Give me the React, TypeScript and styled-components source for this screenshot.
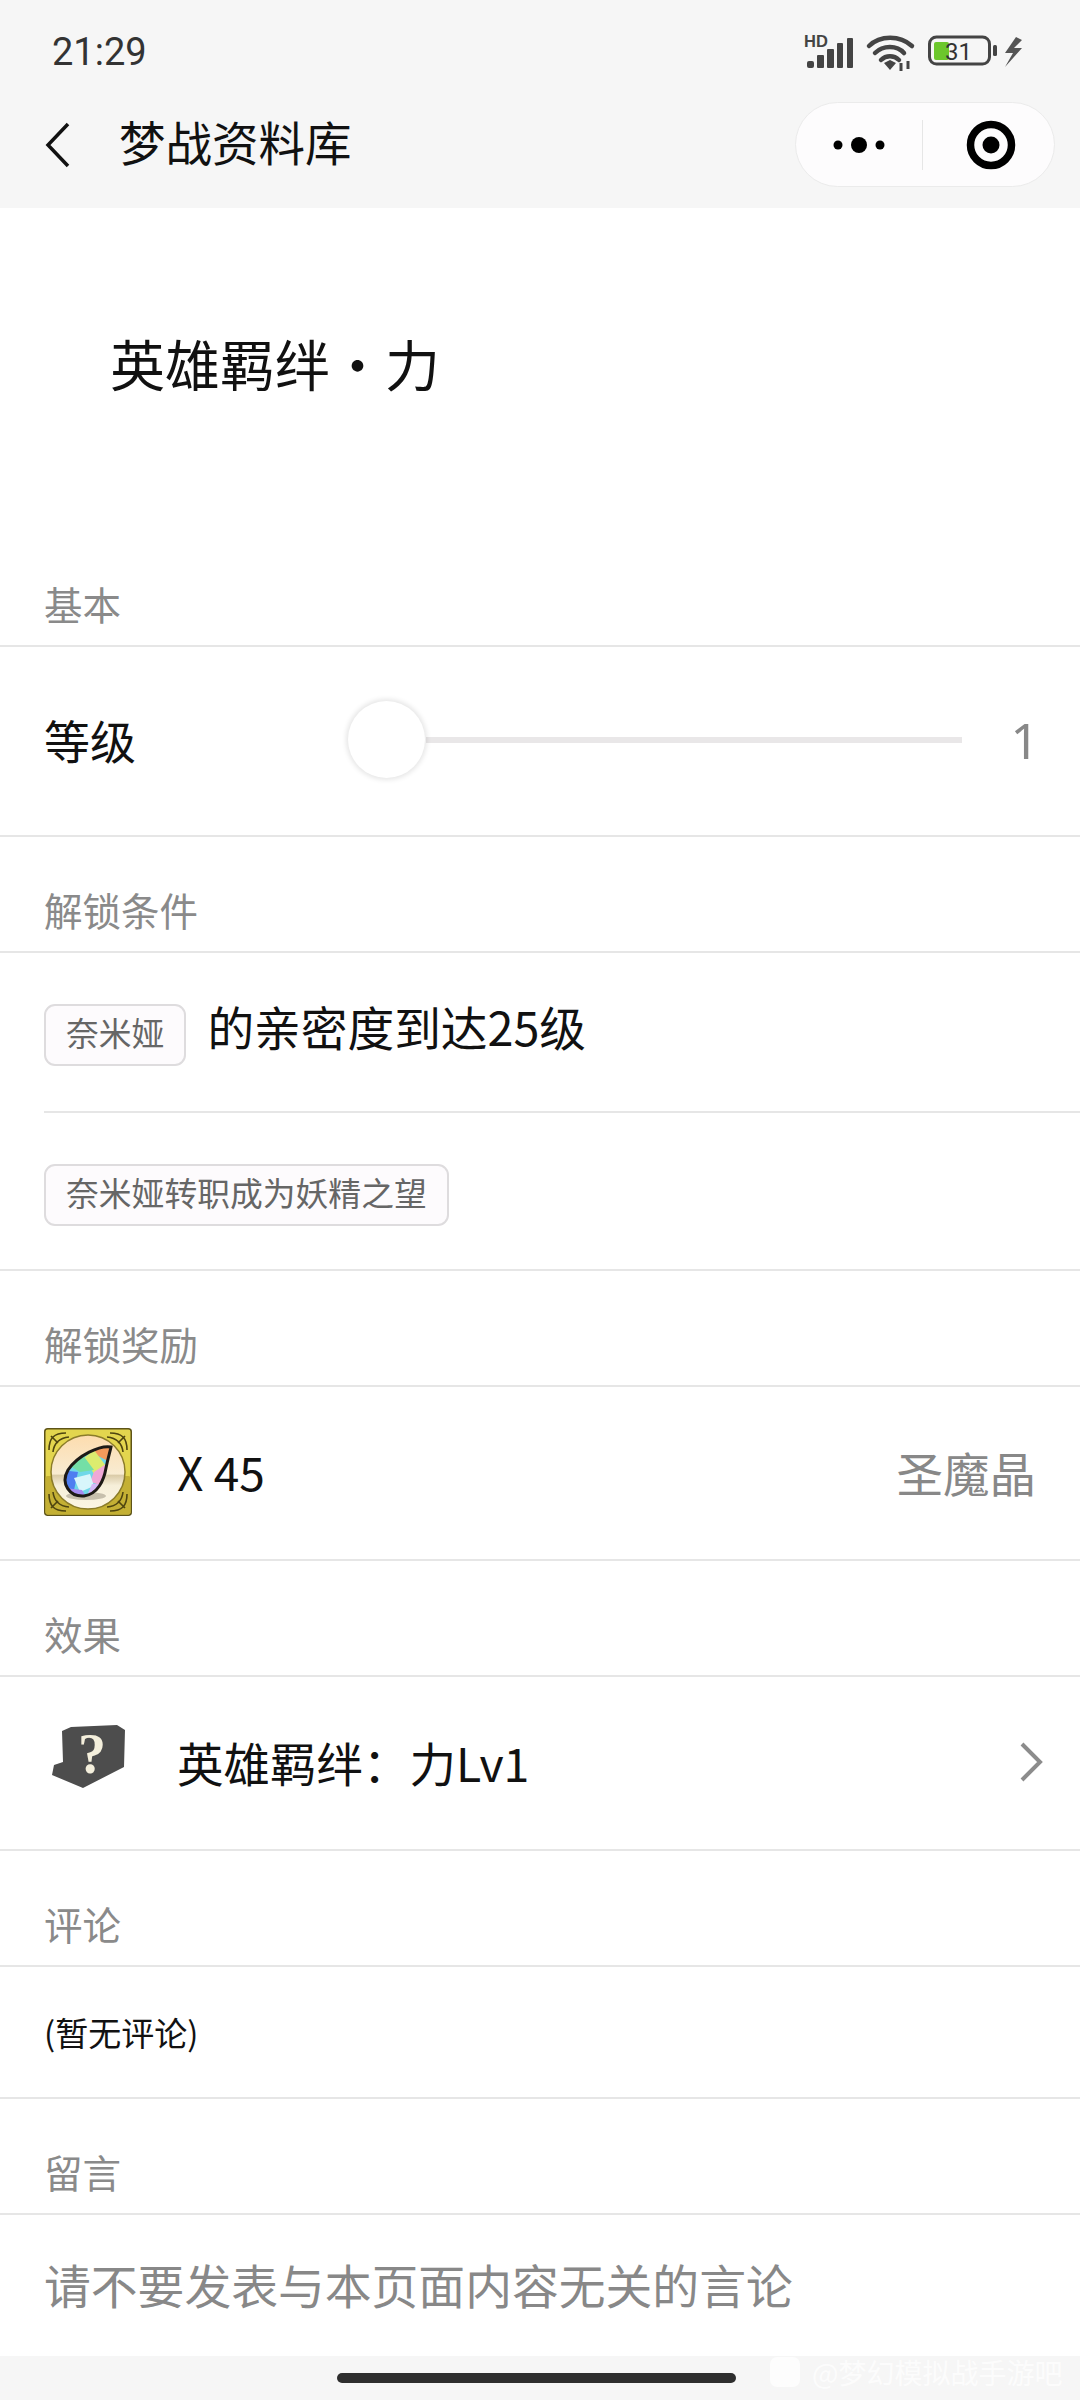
import React from "react";
import styled, { createGlobalStyle } from "styled-components";

const Global = createGlobalStyle`
  html, body { margin: 0; padding: 0; background: #fff; }
  body { font-family: "Noto Sans CJK SC", "Noto Sans", sans-serif; }
  * { box-sizing: border-box; }
`;

const Page = styled.div`
  position: relative;
  width: 1080px;
  height: 2400px;
  display: flex;
  flex-direction: column;
  background: #fff;
  overflow: hidden;
`;

const Top = styled.header`
  height: 208px;
  background: #f6f6f6;
  display: flex;
  flex-direction: column;
`;

const StatusBar = styled.div`
  height: 102px;
  padding: 30px 58px 0 52px;
  display: flex;
  justify-content: space-between;
  align-items: flex-start;
`;

const Time = styled.span`
  font-family: Roboto, sans-serif;
  font-size: 38px;
  line-height: 44px;
  color: #333;
`;

const StatusIcons = styled.svg`
  display: block;
  margin-top: -4px;
`;

const NavBar = styled.div`
  flex: 1;
  display: flex;
  align-items: flex-start;
  padding: 0 25px 0 45px;
`;

const BackIcon = styled.svg`
  display: block;
  margin-top: 20px;
`;

const NavTitle = styled.div`
  margin-left: 48px;
  margin-top: -3px;
  font-size: 46.500px;
  line-height: 84px;
  color: #111;
`;

const Capsule = styled.div`
  margin-left: auto;
  width: 260px;
  height: 85px;
  border-radius: 43px;
  background: #fdfcfd;
  border: 1.500px solid #ebebeb;
  display: flex;
  align-items: center;
`;

const CapsuleSide = styled.div`
  flex: 1;
  height: 50px;
  display: flex;
  align-items: center;
  justify-content: center;
  & + & { border-left: 1.500px solid #e6e6e6; padding-left: 6px; }
`;

const TitleBlock = styled.div`
  height: 323px;
  padding: 126px 0 0 110px;
  font-size: 55px;
  line-height: 56px;
  color: #111;
`;

const SectionLabel = styled.div`
  height: 116px;
  padding: 0 0 20px 44px;
  display: flex;
  align-items: flex-end;
  border-bottom: 2px solid #e6e6e6;
  font-size: 38.500px;
  line-height: 44px;
  color: #8a8a8a;
`;

const Row = styled.div<{ $h: number; $inset?: boolean; $plain?: boolean }>`
  position: relative;
  height: ${(p) => p.$h}px;
  display: flex;
  align-items: center;
  padding: 0 44px 3px;
  border-bottom: ${(p) => (p.$plain ? "none" : "2px solid #e6e6e6")};
  margin-left: ${(p) => (p.$inset ? 44 : 0)}px;
  padding-left: ${(p) => (p.$inset ? 0 : 44)}px;
`;

const Text = styled.span<{ $size?: number }>`
  font-size: ${(p) => p.$size ?? 46}px;
  line-height: 1.2;
  color: #111;
`;

const SideText = styled.span`
  margin-left: auto;
  font-size: 46.500px;
  line-height: 1.2;
  color: #888;
`;

const LevelLabel = styled(Text)`
  width: 302px;
`;

const Slider = styled.div`
  position: relative;
  width: 616px;
  height: 6px;
  background: linear-gradient(to right, transparent 80px, #e9e7e8 80px);
`;

const Thumb = styled.div`
  position: absolute;
  left: 2px;
  top: -36px;
  width: 77px;
  height: 77px;
  border-radius: 50%;
  background: #fff;
  box-shadow: 0 0 5px 2px rgba(0, 0, 0, 0.1);
`;

const LevelValue = styled(SideText)`
  font-family: "Noto Sans", sans-serif;
  font-size: 50px;
  margin-right: -3px;
`;

const Tag = styled.span`
  height: 62px;
  display: inline-flex;
  align-items: center;
  padding: 0 20px 7px;
  border: 2px solid #dedcde;
  border-radius: 11px;
  background: #fdfbfd;
  font-size: 32.800px;
  color: #666;
  white-space: nowrap;
`;

const ConditionOne = styled.div`
  display: flex;
  align-items: flex-start;
  gap: 21px;
  margin-top: 9px;
`;

const ConditionText = styled(Text)`
  margin-top: -6px;
  font-size: 46.700px;
`;

const ConditionTwo = styled.div`
  display: flex;
  margin-top: 10px;
`;

const IconBox = styled.div`
  width: 88px;
  height: 88px;
  margin-right: 45px;
  flex: none;
`;

const Drawing = styled.svg`
  display: block;
`;

const RightChevron = styled.svg`
  display: block;
  position: absolute;
  right: 36px;
  top: 65px;
`;

const CommentText = styled(Text)`
  margin-top: 4px;
`;

const Placeholder = styled.span`
  font-size: 46.800px;
  line-height: 1.2;
  color: #888;
`;

const BottomBar = styled.footer`
  position: relative;
  flex: 1;
  background: #f6f6f6;
  display: flex;
  justify-content: flex-start;
  padding: 17px 0 0 337px;
`;

const HomePill = styled.div`
  width: 399px;
  height: 10px;
  border-radius: 5px;
  background: #2e2e2e;
`;

const Watermark = styled.div`
  position: absolute;
  left: 770px;
  top: 1px;
  display: flex;
  align-items: center;
  gap: 12px;
  color: rgba(255, 255, 255, 0.72);
  font-size: 28px;
  line-height: 30px;
  white-space: nowrap;
`;

const WatermarkBadge = styled.div`
  width: 30px;
  height: 30px;
  border-radius: 7px;
  background: rgba(255, 255, 255, 0.72);
`;

const Status = () => (
  <StatusIcons width="218" height="48" viewBox="0 -8 218 48">
    <text x="0" y="13" fontFamily="Liberation Sans, sans-serif" fontWeight="700" fontSize="16.500" fill="#444">HD</text>
    <g fill="#444">
      <rect x="3" y="27" width="7" height="7" rx="2" />
      <rect x="13" y="21" width="7" height="13" rx="1" />
      <rect x="23" y="15" width="7" height="19" rx="1" />
      <rect x="33" y="9" width="6" height="25" rx="1" />
      <rect x="43" y="4" width="6" height="30" rx="1" />
    </g>
    <g fill="none" stroke="#444" strokeWidth="4.500" strokeLinecap="round">
      <path d="M65 12 C76 1 96 1 108 12" />
      <path d="M71 19 C79 11 93 11 100 19" />
      <path d="M77 26 C82 21 90 21 95 26" />
    </g>
    <path d="M80 29 L86 26 L92 29 L86 36 Z" fill="#444" />
    <path d="M97 29v8M104 27v8" stroke="#444" strokeWidth="3" />
    <rect x="125.500" y="3" width="60" height="27" rx="7" fill="none" stroke="#444" strokeWidth="3" />
    <rect x="130" y="8" width="15" height="18" rx="2" fill="#6cc72c" />
    <text x="141" y="26" fontFamily="Roboto, sans-serif" fontSize="24" fill="#333">31</text>
    <rect x="189" y="11" width="4" height="11" rx="1.500" fill="#444" />
    <path d="M212 3 L201 19 L209 19 L201 33 L218 14 L210 14 L218 6 Z" fill="#555" />
  </StatusIcons>
);

const GEM_SHAPE = "M67 19 C56 17 34 27 24 42 C16 56 26 69 40 68 C54 66 60 52 62 40 C64 30 66 24 67 19 Z";

const Gem = () => (
  <Drawing width="88" height="88" viewBox="0 0 88 88">
    <defs>
      <linearGradient id="disc" x1="0" y1="0" x2="0" y2="1">
        <stop offset="0" stopColor="#fddcae" />
        <stop offset="0.53" stopColor="#f8ecd2" />
        <stop offset="0.54" stopColor="#d9caa6" />
        <stop offset="0.68" stopColor="#f6efd9" />
        <stop offset="1" stopColor="#fcf6e4" />
      </linearGradient>
      <clipPath id="gemClip">
        <path d={GEM_SHAPE} />
      </clipPath>
    </defs>
    <rect x="0.750" y="0.750" width="86.500" height="86.500" rx="3" fill="#e3d54e" stroke="#5d5318" strokeWidth="1.500" />
    <rect x="1.500" y="48" width="85" height="38.500" rx="2" fill="#c4b034" />
    <g fill="none" stroke="#4f4510" strokeWidth="1.600">
      <path d="M5 22 C5 10 10 5 22 5 M9 24 C10 15 15 10 25 9 M66 5 C78 5 83 10 83 22 M63 9 C73 10 78 15 79 24" />
      <path d="M5 66 C5 78 10 83 22 83 M9 64 C10 73 15 78 25 79 M66 83 C78 83 83 78 83 66 M63 79 C73 78 78 73 79 64" />
      <path d="M7 8 L14 15 M81 8 L74 15 M7 80 L14 73 M81 80 L74 73" />
    </g>
    <circle cx="44" cy="44" r="37" fill="url(#disc)" stroke="#8b7c2a" strokeWidth="1.500" />
    <ellipse cx="42" cy="68" rx="20" ry="4" fill="#6b6250" opacity="0.35" />
    <g clipPath="url(#gemClip)">
      <rect x="15" y="15" width="55" height="55" fill="#6fd8e8" />
      <path d="M70 15 L70 36 L50 26 L52 15 Z" fill="#f39a5b" />
      <path d="M50 22 L62 38 L50 46 L40 30 Z" fill="#dcec6f" />
      <path d="M38 26 L50 42 L36 44 L26 38 Z" fill="#74dfa6" />
      <path d="M62 36 L60 58 L46 54 L50 44 Z" fill="#f0a8d6" />
      <path d="M18 42 L34 44 L30 62 L18 60 Z" fill="#4e7ef0" />
      <path d="M30 50 L46 46 L50 58 L36 64 Z" fill="#d8f6fb" />
      <path d="M20 60 L38 62 L44 72 L20 72 Z" fill="#a68cf2" />
      <path d="M48 56 L60 56 L52 72 L42 70 Z" fill="#d3b8f7" />
    </g>
    <path d={GEM_SHAPE} fill="none" stroke="#1d1a16" strokeWidth="3" />
  </Drawing>
);

const Unknown = () => (
  <Drawing width="88" height="88" viewBox="0 0 88 88">
    <path d="M18 13 L27 9 L73 7 L81 12 L80 49 L39 70 L8 57 L10 47 L19 44 Z" fill="#4d4d4d" />
    <text x="48" y="55" textAnchor="middle" fontFamily="Liberation Serif, serif" fontWeight="700" fontSize="56" fill="#f4efdc">?</text>
  </Drawing>
);

export default function App() {
  return (
    <Page>
      <Global />
      <Top>
        <StatusBar>
          <Time>21:29</Time>
          <Status />
        </StatusBar>
        <NavBar>
          <BackIcon width="26" height="46" viewBox="0 0 26 46">
            <path d="M23 2 L3 23 L23 44" fill="none" stroke="#111" strokeWidth="3.500" />
          </BackIcon>
          <NavTitle>梦战资料库</NavTitle>
          <Capsule>
            <CapsuleSide>
              <Drawing width="60" height="20" viewBox="0 0 60 20">
                <circle cx="9" cy="10" r="4.500" fill="#000" />
                <circle cx="30" cy="10" r="8" fill="#000" />
                <circle cx="51" cy="10" r="4.500" fill="#000" />
              </Drawing>
            </CapsuleSide>
            <CapsuleSide>
              <Drawing width="50" height="50" viewBox="0 0 50 50">
                <circle cx="25" cy="25" r="20.500" fill="none" stroke="#000" strokeWidth="7.500" />
                <circle cx="25" cy="25" r="8.500" fill="#000" />
              </Drawing>
            </CapsuleSide>
          </Capsule>
        </NavBar>
      </Top>

      <TitleBlock>英雄羁绊・力</TitleBlock>

      <SectionLabel>基本</SectionLabel>
      <Row $h={190}>
        <LevelLabel>等级</LevelLabel>
        <Slider>
          <Thumb />
        </Slider>
        <LevelValue>1</LevelValue>
      </Row>

      <SectionLabel>解锁条件</SectionLabel>
      <Row $h={160} $inset>
        <ConditionOne>
          <Tag>奈米娅</Tag>
          <ConditionText>的亲密度到达25级</ConditionText>
        </ConditionOne>
      </Row>
      <Row $h={158}>
        <ConditionTwo>
          <Tag>奈米娅转职成为妖精之望</Tag>
        </ConditionTwo>
      </Row>

      <SectionLabel>解锁奖励</SectionLabel>
      <Row $h={174}>
        <IconBox>
          <Gem />
        </IconBox>
        <Text>X 45</Text>
        <SideText>圣魔晶</SideText>
      </Row>

      <SectionLabel>效果</SectionLabel>
      <Row $h={174}>
        <IconBox>
          <Unknown />
        </IconBox>
        <Text $size={46.500}>英雄羁绊：力Lv1</Text>
        <RightChevron width="26" height="40" viewBox="0 0 26 40">
          <path d="M4 2 L22 20 L4 38" fill="none" stroke="#8c8c8c" strokeWidth="4" />
        </RightChevron>
      </Row>

      <SectionLabel>评论</SectionLabel>
      <Row $h={132}>
        <CommentText $size={33}>(暂无评论)</CommentText>
      </Row>

      <SectionLabel>留言</SectionLabel>
      <Row $h={141} $plain>
        <Placeholder>请不要发表与本页面内容无关的言论</Placeholder>
      </Row>

      <BottomBar>
        <HomePill />
        <Watermark>
          <WatermarkBadge />
          @梦幻模拟战手游吧
        </Watermark>
      </BottomBar>
    </Page>
  );
}
